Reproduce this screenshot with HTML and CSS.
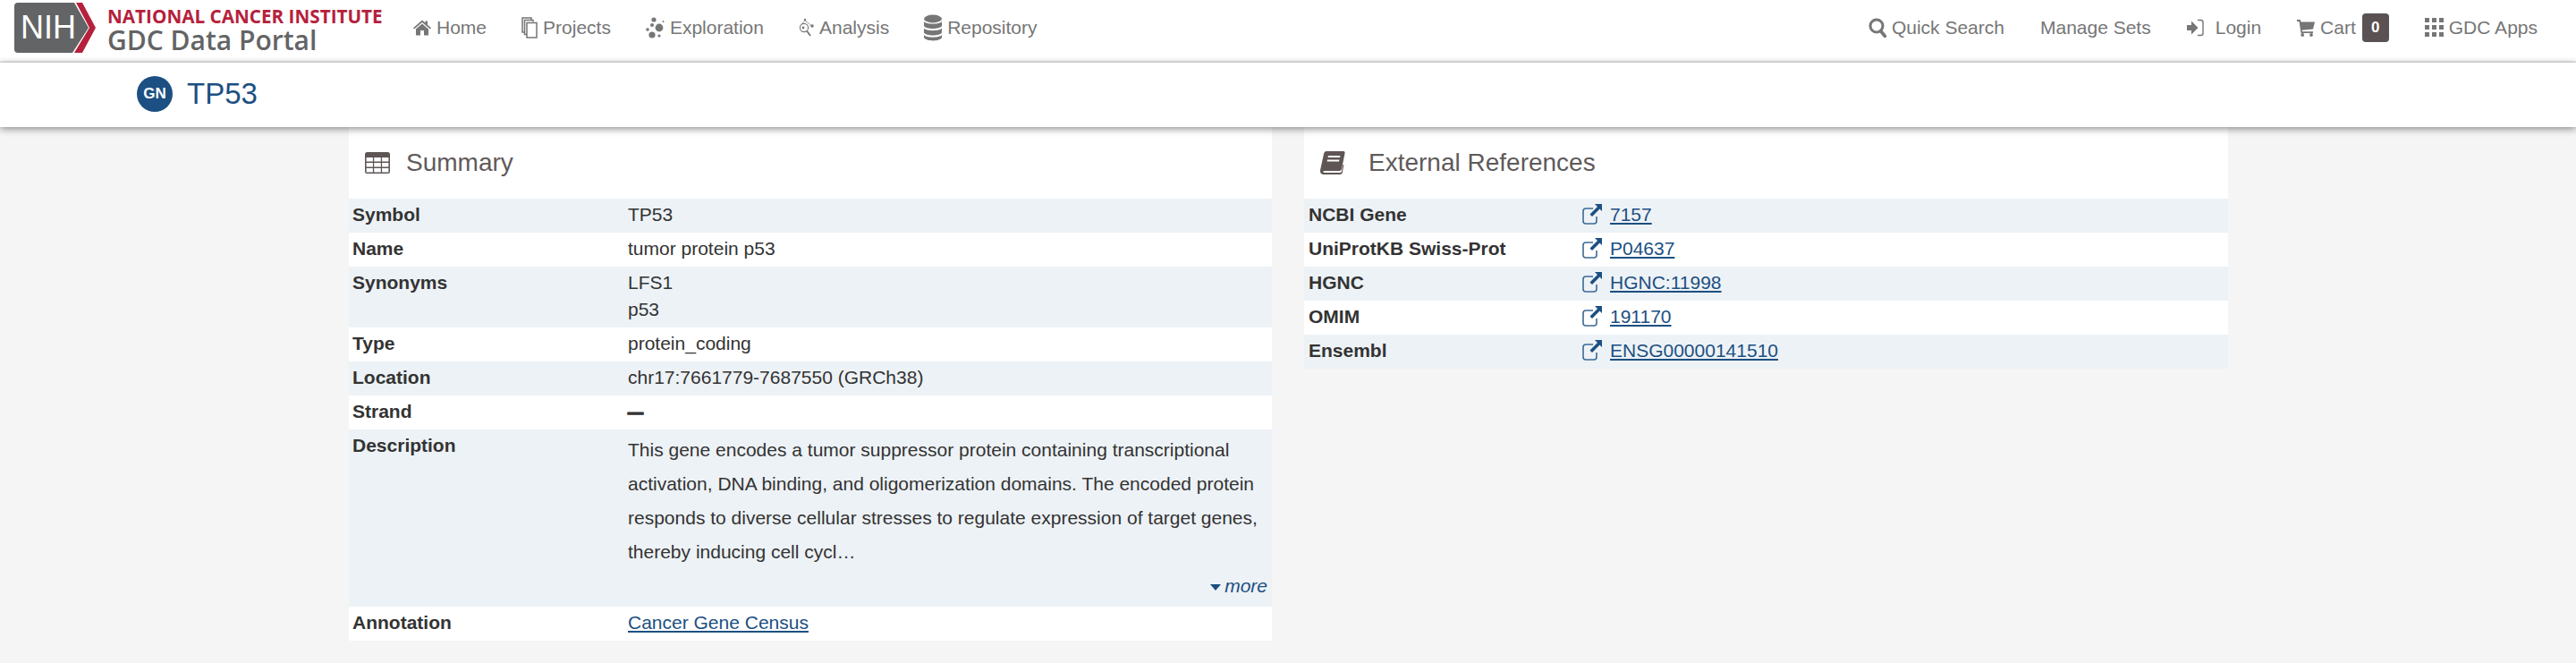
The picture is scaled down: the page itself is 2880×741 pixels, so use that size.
FILE: index.html
```html
<!DOCTYPE html>
<html lang="en">
<head>
    <meta charset="UTF-8">
    <meta name="viewport" content="width=device-width, initial-scale=1.0">
    <title>TP53 | GDC Data Portal</title>
    <link rel="stylesheet" href="styles.css">
</head>
<body>

    <nav class="topbar">
        <a class="brand" href="#">
            <span class="nih-badge">
                <svg class="nih-shape" width="91" height="56" viewBox="0 0 91 56"><path d="M4 0 H67 L83 28 L65 56 H4 Q0 56 0 52 V4 Q0 0 4 0 Z" fill="#636466"/><polygon points="69,0 76,0 91,28 76,56 67,56 84,28" fill="#b5213c"/></svg>
                <span class="nih-text">NIH</span>
            </span>
            <span class="brand-text">
                <span class="brand-nci">NATIONAL CANCER INSTITUTE</span>
                <span class="brand-gdc">GDC Data Portal</span>
            </span>
        </a>

        <div class="nav-links">
            <a class="nav-item" href="#">
                <svg class="icon" width="20" height="18" viewBox="0 0 20 18"><path d="M10 0.5 L13.5 3.6 V1.5 H16 V5.8 L20 9.3 L18.9 10.6 L10 2.9 L1.1 10.6 L0 9.3 Z M10 4.6 L17 10.6 V17.5 H12 V12 H8 V17.5 H3 V10.6 Z"/></svg>
                Home
            </a>
            <a class="nav-item" href="#">
                <svg class="icon-line" width="18" height="24" viewBox="0 0 18 24" stroke-width="1.5"><path d="M11 3 V1 H1 V17 H3"/><path d="M13 5.5 V3.5 H3.5 V19.5 H6"/><rect x="6" y="6.5" width="11" height="16.5"/></svg>
                Projects
            </a>
            <a class="nav-item" href="#">
                <svg class="icon" width="21" height="24" viewBox="0 0 21 24"><circle cx="9" cy="3" r="2.6"/><circle cx="15" cy="12" r="4.4"/><circle cx="7" cy="9" r="2"/><circle cx="2" cy="14" r="1.8"/><circle cx="7" cy="20" r="3.6"/><circle cx="15" cy="21" r="1.6"/><circle cx="19.5" cy="5" r="1"/></svg>
                Exploration
            </a>
            <a class="nav-item" href="#">
                <svg class="icon-line" width="17" height="24" viewBox="0 0 17 24" stroke-width="1.1"><circle cx="6" cy="12" r="4.6"/><path d="M9 15.5 L13 21" stroke-width="1.8"/><path d="M7 4 L14 9.5 M7 4 L3 8" stroke-width="0.7"/><circle class="dot" cx="7" cy="3" r="1.2"/><circle class="dot" cx="15" cy="10" r="1.8"/><circle class="dot" cx="5" cy="12" r="1.4"/></svg>
                Analysis
            </a>
            <a class="nav-item" href="#">
                <svg class="icon" width="20" height="30" viewBox="0 0 20 30"><ellipse cx="10" cy="5" rx="10" ry="4.4"/><path d="M0 8 C2 11.5 18 11.5 20 8 V13 C18 17 2 17 0 13 Z"/><path d="M0 15.5 C2 19 18 19 20 15.5 V20.5 C18 24.5 2 24.5 0 20.5 Z"/><path d="M0 23 C2 26.5 18 26.5 20 23 V26 C18 30.5 2 30.5 0 26 Z"/></svg>
                Repository
            </a>
        </div>

        <div class="nav-links nav-right">
            <a class="nav-item" href="#">
                <svg class="icon-line" width="20" height="22" viewBox="0 0 20 22"><circle cx="9" cy="9" r="7" stroke-width="3"/><path d="M13.5 14.5 L18.5 20.5" stroke-width="3.6" stroke-linecap="round"/></svg>
                Quick Search
            </a>
            <a class="nav-item" href="#">Manage Sets</a>
            <a class="nav-item nav-login" href="#">
                <svg class="icon-line" width="19" height="20" viewBox="0 0 19 20" stroke-width="1.4"><path class="dot" d="M0 7 H5 V2.5 L12.5 10 L5 17.5 V13 H0 Z"/><path d="M12 1.5 H15.5 Q18 1.5 18 4 V16 Q18 18.5 15.5 18.5 H12"/></svg>
                Login
            </a>
            <a class="nav-item" href="#">
                <svg class="icon" width="20" height="20" viewBox="0 0 20 20"><path d="M0 1 H3.8 L4.6 3.5 H20 L18 11.5 L5.6 12.8 L6 14.2 H18 V16 H4.5 L2.5 3 H0 Z"/><circle cx="6.2" cy="18" r="1.9"/><circle cx="16" cy="18" r="1.9"/></svg>
                Cart
                <span class="badge">0</span>
            </a>
            <a class="nav-item" href="#">
                <svg class="icon" width="21" height="22" viewBox="0 0 21 22"><rect x="0" y="0" width="5" height="5"/><rect x="8" y="0" width="5" height="5"/><rect x="16" y="0" width="5" height="5"/><rect x="0" y="8" width="5" height="5"/><rect x="8" y="8" width="5" height="5"/><rect x="16" y="8" width="5" height="5"/><rect x="0" y="16" width="5" height="5"/><rect x="8" y="16" width="5" height="5"/><rect x="16" y="16" width="5" height="5"/></svg>
                GDC Apps
            </a>
        </div>
    </nav>

    <header class="entity-header">
        <span class="entity-badge">GN</span>
        <h1 class="entity-title">TP53</h1>
    </header>

    <main class="page">
        <section class="card">
            <h2 class="card-title">
                <svg class="title-icon" width="28" height="24" viewBox="0 0 28 24"><path fill-rule="evenodd" d="M2.5 0 H25.5 Q28 0 28 2.5 V21.5 Q28 24 25.5 24 H2.5 Q0 24 0 21.5 V2.5 Q0 0 2.5 0 Z M1.6 6 V10.6 H8.9 V6 Z M10.2 6 V10.6 H17.8 V6 Z M19.1 6 V10.6 H26.4 V6 Z M1.6 12 V16.6 H8.9 V12 Z M10.2 12 V16.6 H17.8 V12 Z M19.1 12 V16.6 H26.4 V12 Z M1.6 18 V22.4 H8.9 V18 Z M10.2 18 V22.4 H17.8 V18 Z M19.1 18 V22.4 H26.4 V18 Z"/></svg>
                Summary
            </h2>
            <table class="info-table summary-table">
                <tr><th>Symbol</th><td>TP53</td></tr>
                <tr><th>Name</th><td>tumor protein p53</td></tr>
                <tr><th>Synonyms</th><td>LFS1<br>p53</td></tr>
                <tr><th>Type</th><td>protein_coding</td></tr>
                <tr><th>Location</th><td>chr17:7661779-7687550 (GRCh38)</td></tr>
                <tr><th>Strand</th><td><span class="strand">—</span></td></tr>
                <tr>
                    <th>Description</th>
                    <td>
                        <p class="description">This gene encodes a tumor suppressor protein containing transcriptional activation, DNA binding, and oligomerization domains. The encoded protein responds to diverse cellular stresses to regulate expression of target genes, thereby inducing cell cycl…</p>
                        <div class="more"><span class="caret"></span>more</div>
                    </td>
                </tr>
                <tr><th>Annotation</th><td><a href="#">Cancer Gene Census</a></td></tr>
            </table>
        </section>

        <section class="card card-refs">
            <h2 class="card-title">
                <svg class="title-icon book-icon" width="28" height="26" viewBox="0 0 28 26"><path fill-rule="evenodd" d="M7 0 H26 Q28 0 27.5 2.5 L24 20 Q23.5 22 21.5 22 H5 Q3 22 3.3 23 Q3.6 24 5 24 H22 Q23.5 24 24 22.5 L25.5 15 L26.5 15 L24.8 24 Q24.4 26 22 26 H4 Q0 26 0 22 Q0 21 0.3 20 L4 3 Q4.6 0 7 0 Z M9 5 L8.6 7 H22 L22.4 5 Z M8 9.5 L7.6 11.5 H21 L21.4 9.5 Z"/></svg>
                External References
            </h2>
            <table class="info-table refs-table">
                <tr><th>NCBI Gene</th><td><svg class="ext-icon" viewBox="0 0 22 24"><use href="#ext"/></svg><a href="#">7157</a></td></tr>
                <tr><th>UniProtKB Swiss-Prot</th><td><svg class="ext-icon" viewBox="0 0 22 24"><use href="#ext"/></svg><a href="#">P04637</a></td></tr>
                <tr><th>HGNC</th><td><svg class="ext-icon" viewBox="0 0 22 24"><use href="#ext"/></svg><a href="#">HGNC:11998</a></td></tr>
                <tr><th>OMIM</th><td><svg class="ext-icon" viewBox="0 0 22 24"><use href="#ext"/></svg><a href="#">191170</a></td></tr>
                <tr><th>Ensembl</th><td><svg class="ext-icon" viewBox="0 0 22 24"><use href="#ext"/></svg><a href="#">ENSG00000141510</a></td></tr>
            </table>
        </section>
    </main>

    <svg class="sprites" width="0" height="0">
        <symbol id="ext" viewBox="0 0 22 24">
            <path d="M12 6 H4 Q1 6 1 9 V20 Q1 23 4 23 H13 Q16 23 16 20 V15" fill="none" stroke="#3b6a96" stroke-width="1.6"/>
            <path d="M14 1 H22 V9 L19.5 6.5 L11 15 L8.5 12.5 L17 4 Z" fill="#1c4f82"/>
        </symbol>
    </svg>

</body>
</html>
```

FILE: styles.css
```css
* {
    box-sizing: border-box;
}
body {
    margin: 0;
    font-family: "Liberation Sans", Arial, sans-serif;
    font-size: 21px;
    color: #333;
    background-color: #f5f5f5;
}
a {
    color: #1c4f82;
}

/* top nav */
.topbar {
    display: flex;
    align-items: center;
    height: 70px;
    padding: 0 43px 6px 16px;
    background: #fff;
    border-bottom: 2px solid #e7e7e7;
}
.brand {
    display: flex;
    align-items: center;
    gap: 13px;
    width: 446px;
    text-decoration: none;
}
.nih-badge {
    position: relative;
    display: block;
    width: 91px;
    height: 56px;
    flex: none;
}
.nih-shape {
    display: block;
}
.nih-text {
    position: absolute;
    left: 7px;
    top: 7px;
    font-size: 36px;
    line-height: 42px;
    color: #fff;
}
.brand-text {
    display: flex;
    flex-direction: column;
    padding-top: 3px;
}
.brand-nci {
    font-family: "Open Sans", sans-serif;
    font-size: 20.7px;
    font-weight: 700;
    line-height: 24px;
    color: #b5213c;
    white-space: nowrap;
}
.brand-gdc {
    font-family: "Open Sans", sans-serif;
    font-size: 30px;
    font-weight: 600;
    line-height: 30px;
    color: #636466;
    white-space: nowrap;
}
.nav-links {
    display: flex;
    align-items: center;
    gap: 39px;
}
.nav-right {
    gap: 40px;
    margin-left: auto;
}
.nav-item {
    display: flex;
    align-items: center;
    gap: 6px;
    font-size: 21px;
    color: #767676;
    text-decoration: none;
    white-space: nowrap;
}
.nav-login {
    gap: 13px;
}
.icon {
    fill: #767676;
    flex: none;
}
.icon-line {
    fill: none;
    stroke: #767676;
    flex: none;
}
.icon-line .dot {
    fill: #767676;
    stroke: none;
}
.badge {
    display: inline-block;
    width: 30px;
    height: 32px;
    margin-left: 1px;
    border-radius: 4px;
    background: #5a5252;
    color: #fff;
    font-size: 17px;
    font-weight: 700;
    line-height: 32px;
    text-align: center;
}

/* entity header */
.entity-header {
    position: relative;
    display: flex;
    align-items: center;
    gap: 16px;
    height: 72px;
    padding: 0 0 2px 153px;
    background: #fff;
    box-shadow: 0 2px 8px rgba(0, 0, 0, 0.45);
}
.entity-badge {
    width: 40px;
    height: 40px;
    border-radius: 50%;
    background: #1c4f82;
    color: #fff;
    font-size: 17px;
    font-weight: 700;
    line-height: 40px;
    text-align: center;
}
.entity-title {
    margin: 0;
    font-size: 33px;
    font-weight: 400;
    color: #1c4f82;
}

/* cards */
.page {
    display: flex;
    align-items: flex-start;
    gap: 36px;
    padding-left: 390px;
}
.card {
    width: 1032px;
    background: #fff;
}
.card-refs {
    width: 1033px;
}
.card-title {
    display: flex;
    align-items: center;
    gap: 18px;
    height: 80px;
    margin: 0;
    padding-left: 18px;
    font-size: 28px;
    font-weight: 400;
    color: #5f5a5a;
}
.title-icon {
    fill: #5f5555;
    flex: none;
}
.book-icon {
    margin-right: 8px;
}
.info-table {
    width: 100%;
    border-collapse: collapse;
}
.info-table tr:nth-child(odd) {
    background-color: #edf2f6;
}
.info-table th,
.info-table td {
    height: 38px;
    padding: 3px 5px 5px;
    line-height: 30px;
    text-align: left;
    vertical-align: top;
}
.summary-table th {
    width: 307px;
    padding-left: 4px;
}
.refs-table th {
    width: 306px;
}
.description {
    margin: 1px 0 0;
    line-height: 38px;
}
.more {
    margin-bottom: -1px;
    line-height: 38px;
    text-align: right;
    font-style: italic;
    color: #1c4f82;
}
.caret {
    display: inline-block;
    margin-right: 4px;
    vertical-align: middle;
    border-top: 7px solid #1c4f82;
    border-left: 6px solid transparent;
    border-right: 6px solid transparent;
}
.strand {
    display: inline-block;
    font-size: 17px;
    line-height: 26px;
    font-weight: 700;
    -webkit-text-stroke: 1.5px #333;
}
.ext-icon {
    width: 22px;
    height: 24px;
    margin-right: 9px;
    vertical-align: -4px;
}
.sprites {
    position: absolute;
}
```
